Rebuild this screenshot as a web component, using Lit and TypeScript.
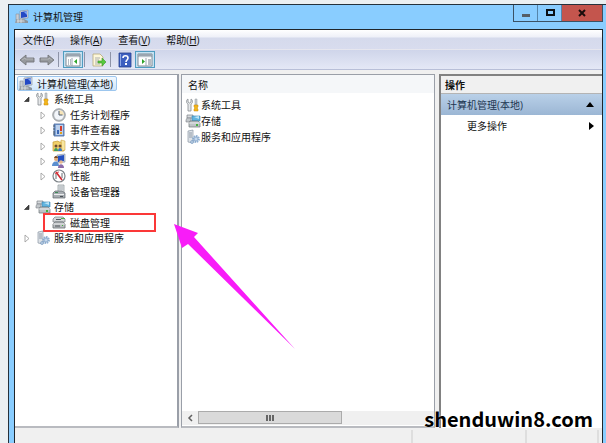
import { LitElement, html, css, svg, nothing, TemplateResult } from "lit";
import { customElement, property, state } from "lit/decorators.js";
import { classMap } from "lit/directives/class-map.js";

type Node = { label: string; icon: string; depth: number; open?: boolean; leaf?: boolean; marked?: boolean };

const TREE: Node[] = [
  { label: "计算机管理(本地)", icon: "computer", depth: 0, leaf: true },
  { label: "系统工具", icon: "tools", depth: 1, open: true },
  { label: "任务计划程序", icon: "clock", depth: 2 },
  { label: "事件查看器", icon: "event", depth: 2 },
  { label: "共享文件夹", icon: "share", depth: 2 },
  { label: "本地用户和组", icon: "users", depth: 2 },
  { label: "性能", icon: "perf", depth: 2 },
  { label: "设备管理器", icon: "device", depth: 2, leaf: true },
  { label: "存储", icon: "storage", depth: 1, open: true },
  { label: "磁盘管理", icon: "disk", depth: 2, leaf: true, marked: true },
  { label: "服务和应用程序", icon: "services", depth: 1 },
];

const ITEMS = [
  { label: "系统工具", icon: "tools" },
  { label: "存储", icon: "storage" },
  { label: "服务和应用程序", icon: "services" },
];

const MENUS = [
  ["文件", "F"],
  ["操作", "A"],
  ["查看", "V"],
  ["帮助", "H"],
];

const ICONS: Record<string, TemplateResult> = {
  computer: svg`
    <path d="M5 1l8-1v8l-8 1z" fill="#d5dbe3" stroke="#7f8b9b" stroke-width=".6"/>
    <path d="M6 2l6-1v6l-6 1z" fill="#2349c4"/><path d="M9 2l3-1v4z" fill="#7ea6f2"/>
    <path d="M1 4h3v6H1z" fill="#c9ced4" stroke="#8a929c" stroke-width=".6"/>
    <path d="M1 9h8l3 4H0z" fill="#9aa1a8"/><path d="M2 11h8M3 9v4M6 9v4" stroke="#eceff1" stroke-width=".7"/>
    <path d="M9 9l4 2v2h-3z" fill="#8d959d"/>`,
  tools: svg`
    <path d="M2 1v3l1.500 1L5 4V1c2 1 2 4 0 5v7H2V6C0 5 0 2 2 1z" fill="#e6e8ea" stroke="#858b91" stroke-width=".8"/>
    <path d="M9 1h2v6H9z" fill="#c9cdd1" stroke="#92989e" stroke-width=".5"/>
    <path d="M8 7h4v2l-1 1 1 1v2H8v-2l1-1-1-1z" fill="#f2b51c" stroke="#c98a08" stroke-width=".5"/>`,
  clock: svg`
    <circle cx="7" cy="7" r="6.300" fill="#b9bdc1" stroke="#85898d" stroke-width=".7"/>
    <circle cx="7" cy="7" r="4.800" fill="#f3f6fa"/>
    <path d="M7 7V2.200A4.800 4.800 0 0 1 11.800 7z" fill="#f6e4b8"/>
    <path d="M7 3v4h3.500" fill="none" stroke="#4c5b6d" stroke-width="1"/>`,
  event: svg`
    <path d="M2 1h10v12H2z" fill="#7fa3d6" stroke="#41639b" stroke-width=".8"/>
    <path d="M4 2h7v10H4z" fill="#bcd0ec"/>
    <path d="M1 3h2M1 6h2M1 9h2M1 11h2" stroke="#3b4652" stroke-width=".8"/>
    <path d="M5 7h2v4H5z" fill="#3c68b5"/><path d="M8 3h2v5H8z" fill="#d23b2e"/><path d="M8 9h2v2H8z" fill="#e3a21a"/>`,
  share: svg`
    <path d="M1 3l5-1 1 1h5v9H1z" fill="#f0cf6a" stroke="#c59b30" stroke-width=".7"/>
    <path d="M9 1l4 1v9l-3 1z" fill="#f8e6a0" stroke="#c59b30" stroke-width=".5"/>
    <circle cx="4" cy="7" r="1.500" fill="#6b4b32"/><circle cx="8" cy="7" r="1.500" fill="#6b4b32"/>
    <path d="M2 12c0-4 4-4 4 0z" fill="#3f9d5b"/><path d="M6 12c0-4 4-4 4 0z" fill="#3a78c4"/>`,
  users: svg`
    <path d="M5 1l8-1v8l-8 1z" fill="#ccd5e0" stroke="#7b8899" stroke-width=".6"/>
    <path d="M6 2l6-1v6l-6 1z" fill="#2450c0"/>
    <circle cx="4" cy="5" r="2" fill="#e0a878"/><path d="M2 4c1-3 4-2 4 0z" fill="#7a4a22"/>
    <path d="M0 12c0-6 7-6 7 0z" fill="#5b8fd0"/>
    <circle cx="9" cy="8" r="1.800" fill="#e9b98e"/><path d="M6 14c0-5 6-5 6 0z" fill="#8b6aa8"/>`,
  perf: svg`
    <circle cx="7" cy="7" r="6" fill="#fff" stroke="#7d8388" stroke-width="1.200"/>
    <path d="M4 10V5M10 9V4" stroke="#666c72" stroke-width="1"/>
    <path d="M4 3l6 8" stroke="#d2272f" stroke-width="1.600"/>
    <path d="M3 5a5 5 0 0 1 4-2" fill="none" stroke="#d2272f" stroke-width=".8"/>`,
  device: svg`
    <path d="M6 0h6v8H6z" fill="#dfe3e6" stroke="#8b9297" stroke-width=".7"/><path d="M7 2h4M7 4h4" stroke="#8b9297" stroke-width=".6"/>
    <path d="M1 8l2-2h7l3 2v5H1z" fill="#a7acb1" stroke="#62686d" stroke-width=".7"/>
    <path d="M2 9h10v1H2z" fill="#eceeef"/><path d="M3 7h3v1H3z" fill="#3f8b57"/><path d="M8 11h3v1H8z" fill="#4d5358"/>`,
  storage: svg`
    <path d="M1 1h6v3H1z" fill="#d7dadd" stroke="#7c8286" stroke-width=".7"/>
    <path d="M6 2h8v5H6z" fill="#62b5e0" stroke="#387fae" stroke-width=".6"/><path d="M8 3l5-1v3z" fill="#bfe5f7"/>
    <path d="M0 6l1-2h4v4H0z" fill="#c2c7ca" stroke="#7c8286" stroke-width=".6"/>
    <path d="M3 9l1-2h8l2 2v4H3z" fill="#bfc4c7" stroke="#6f7579" stroke-width=".7"/>
    <path d="M3 9h11" stroke="#f4f5f6" stroke-width=".8"/><path d="M10 10h2v2h-2z" fill="#45b13f"/>`,
  disk: svg`
    <path d="M1 3l2-2h8l2 2v3H1z" fill="#d3d6d8" stroke="#777d81" stroke-width=".7"/>
    <path d="M4 3h5v1H4z" fill="#555b60"/><path d="M9 2h4v1H9z" fill="#55ae4d"/>
    <path d="M1 8l2-2h8l2 2v4H1z" fill="#b9bdc0" stroke="#686e72" stroke-width=".8"/>
    <path d="M1 8h12" stroke="#f3f4f4" stroke-width=".8"/><path d="M3 10h5" stroke="#4c5257" stroke-width="1"/><path d="M10 9h1v1h-1z" fill="#45b13f"/>`,
  services: svg`
    <path d="M2 1l5-1v13l-5-1z" fill="#dde2e7" stroke="#8996a3" stroke-width=".7"/>
    <path d="M3 3h3M3 5h3M3 7h3" stroke="#7e8c9a" stroke-width=".8"/>
    <circle cx="10" cy="9" r="3" fill="none" stroke="#8fb0d3" stroke-width="1.800" stroke-dasharray="1.600 .7"/>
    <circle cx="10" cy="9" r="2" fill="#c3d8ee" stroke="#7697bd" stroke-width=".7"/>
    <circle cx="6" cy="12" r="1.500" fill="#b5cbe2" stroke="#7697bd" stroke-width=".6"/>`,
  back: svg`<path d="M0 7l6-5v3h8v4H6v3z" fill="#96999d" stroke="#74777b" stroke-width=".9"/><path d="M2 7l3-2v1h8" fill="none" stroke="#b9bbbe" stroke-width=".8"/>`,
  forward: svg`<path d="M14 7L8 2v3H0v4h8v3z" fill="#96999d" stroke="#74777b" stroke-width=".9"/><path d="M1 6h8V5l3 2" fill="none" stroke="#b9bbbe" stroke-width=".8"/>`,
  paneLeft: svg`
    <path d="M0 1h14v12H0z" fill="#fff" stroke="#7f8a95"/><path d="M0 1h14v3H0z" fill="#9aa5b0"/>
    <path d="M1 4h12" stroke="#e6eaee"/><path d="M6 5v8" stroke="#9aa5b0"/>
    <path d="M2 7h3M2 9h3M2 11h3" stroke="#6f7b88" stroke-dasharray="1 1"/><path d="M11 6v5L8 8.500z" fill="#2da42a"/>`,
  paneRight: svg`
    <path d="M0 1h14v12H0z" fill="#fff" stroke="#7f8a95"/><path d="M0 1h14v3H0z" fill="#9aa5b0"/>
    <path d="M1 4h12" stroke="#e6eaee"/><path d="M8 5v8" stroke="#9aa5b0"/>
    <path d="M10 7h3M10 9h3M10 11h3" stroke="#6f7b88"/><path d="M4 6v5l3-2.500z" fill="#2da42a"/>`,
  exportList: svg`
    <path d="M1 1h7l3 3v9H1z" fill="#fdf7da" stroke="#b6a97a" stroke-width=".8"/>
    <path d="M3 5h5M3 7h4M3 9h4M3 11h5" stroke="#8a8f9b" stroke-width=".7"/>
    <path d="M6 8h4V5l4 4-4 4v-3H6z" fill="#58c93d" stroke="#39982a" stroke-width=".6"/>`,
  help: svg`
    <path d="M1 0h12v14H1z" fill="#3c5fc0" stroke="#27408e" stroke-width=".8"/><path d="M2 1h1v12H2z" fill="#8fa8e6"/>
    <path d="M5 5c0-3 5-3 5 0 0 2-2 2-2 4" fill="none" stroke="#fff" stroke-width="1.600"/><path d="M7 10h2v2H7z" fill="#fff"/>`,
};

const icon = (name: string) => html`<svg class="icon" viewBox="0 0 14 14" width="14" height="14" aria-hidden="true">${ICONS[name]}</svg>`;

const base = css`
  * { box-sizing: border-box; }
  button {
    font: inherit; color: inherit; background: none; border: 0; margin: 0; padding: 0;
    display: flex; align-items: center; white-space: nowrap; text-align: left;
  }
  ul { list-style: none; margin: 0; padding: 0; }
  svg { display: block; flex: none; overflow: visible; }
`;

@customElement("console-tree")
export class ConsoleTree extends LitElement {
  @property({ attribute: false }) nodes: Node[] = [];
  @state() private selected = 0;

  static styles = [base, css`
    :host { display: block; min-width: 0; }
    .tree { display: grid; grid-auto-rows: 1fr; height: 170px; }
    .row { display: flex; align-items: center; position: relative; }
    .depth0 { padding-left: 2px; }
    .depth1 { padding-left: 7px; }
    .depth2 { padding-left: 23px; }
    .twist { width: 10px; height: 14px; margin-right: 4px; justify-content: center; flex: none; }
    .name { gap: 4px; height: 15px; }
    .on { padding: 0 3px 0 1px; border: 1px solid #9cc6ee; border-radius: 2px; background: linear-gradient(#f1f8fe, #cfe5fa); }
    .mark { position: absolute; left: 28px; top: -2px; width: 113px; height: 19px; border: 2px solid #fb3838; pointer-events: none; }
  `];

  render() {
    return html`<ul class="tree" role="tree">
      ${this.nodes.map((n, i) => html`
        <li class="row depth${n.depth}" role="treeitem" aria-selected=${i === this.selected}>
          ${n.depth === 0 ? nothing : n.leaf
            ? html`<span class="twist"></span>`
            : html`<button class="twist" aria-label=${n.open ? "折叠" : "展开"}>
                <svg viewBox="0 0 8 8" width="8" height="8">${n.open
                  ? svg`<path d="M6 2v4.500H1.500z" fill="#404040" stroke="#222" stroke-width=".6"/>`
                  : svg`<path d="M2 1l4 3.500L2 8z" fill="#fff" stroke="#a2a2a2" stroke-width=".9"/>`}</svg>
              </button>`}
          <button class=${classMap({ name: true, on: i === this.selected })} @click=${() => (this.selected = i)}>
            ${icon(n.icon)}<span>${n.label}</span>
          </button>
          ${n.marked ? html`<span class="mark"></span>` : nothing}
        </li>`)}
    </ul>`;
  }
}

@customElement("app-root")
export class AppRoot extends LitElement {
  static styles = [base, css`
    :host {
      display: flex; flex-direction: column; position: relative; box-sizing: border-box;
      height: 100vh; padding: 4px 0 0 8px; overflow: hidden; background: #ebf0f2; color: #111;
      font: 10px/14px "Open Sans", "Noto Sans CJK SC", sans-serif;
    }
    .window {
      flex: 1; min-height: 0; display: flex; flex-direction: column;
      background: #89cdff; border: solid #25323c; border-width: 1px 0 0 1px; padding: 0 3px 0 5px;
    }
    .title { display: flex; align-items: flex-start; height: 24px; flex: none; }
    .caption { display: flex; align-items: center; gap: 4px; flex: 1; height: 24px; margin: 0; padding-left: 1px; font: inherit; }
    .controls { display: flex; height: 17px; border: solid #3b5265; border-width: 0 1px 1px; }
    .controls button { justify-content: center; width: 24px; border-right: 1px solid #5585aa; }
    .controls .close { width: 40px; border: 0; background: #c4554d; }

    .client { flex: 1; min-height: 0; display: flex; flex-direction: column; background: #f0f0f0; border: solid #20262b; border-width: 1px 1px 0; }
    .menu {
      display: flex; align-items: center; gap: 16px; height: 20px; flex: none; padding-left: 8px;
      background: linear-gradient(#fff, #eef0f8 7px, #d5daec 8px, #d8dcee); border-bottom: 1px solid #e6e6ee;
    }
    .menu u { text-underline-offset: 1px; }
    .bar {
      display: flex; align-items: center; height: 20px; flex: none; padding-left: 2px;
      background: linear-gradient(#cfd5ea, #e4e8f6); border-bottom: 1px solid #b8bfd8;
    }
    .bar button { width: 20px; height: 17px; justify-content: center; }
    .bar .down { border: 1px solid #4f9cc0; background: #c5e2f2; }
    .sep { width: 1px; height: 15px; background: #8e94a8; margin: 0 4px; }
    .sep.tight { margin: 0 4px 0 1px; }

    .panes { flex: 1; min-height: 0; display: grid; grid-template-columns: 164px minmax(0, 1fr) 163px; gap: 2px; padding-top: 4px; }
    .pane { min-width: 0; min-height: 0; display: flex; flex-direction: column; background: #fff; border: 1px solid #9a9fa8; border-bottom: 2px solid #b9bbc0; }
    .side { border-width: 1px 2px 2px 0; }
    .center { border-width: 1px 1px 2px 1px; margin-right: 2px; }
    .head { height: 18px; margin: 0; padding: 3px 6px 0; background: #f5f7f9; font: inherit; }
    .list { flex: 1; padding: 4px 0 0 4px; }
    .list button { height: 16px; }
    .list .icon { margin-right: 1px; }
    .scroll { display: flex; height: 14px; margin-bottom: 1px; background: #f0f0f0; }
    .scroll button { width: 16px; justify-content: center; }
    .thumb { flex: 0 0 57%; height: 13px; display: flex; align-items: center; justify-content: center; background: #dadada; border: 1px solid #ababab; }

    .actions { border: solid #818181; border-width: 2px 0 0 2px; }
    .actions h2 { margin: 0; height: 18px; padding: 2px 4px; font: inherit; font-weight: 700; background: #f0f0f0; border-bottom: 1px solid #b4b4b4; }
    .actions button { justify-content: space-between; padding: 0 8px 0 6px; height: 21px; }
    .actions .group { background: linear-gradient(#b9d0e8, #9bb6d4); color: #1c3550; }
    .actions .more { padding-left: 26px; }

    console-tree { padding-top: 1px; }

    .status { display: flex; justify-content: flex-end; height: 15px; flex: none; padding-right: 3px; }
    .cell { border-right: 2px solid #dedede; margin-top: 2px; }
    .cell.first { flex: 1; }
    .cell.second { width: 114px; }
    .cell.third { width: 72px; }

    .arrow { position: absolute; left: 174px; top: 224px; pointer-events: none; }
    .site { position: absolute; right: 13px; bottom: 10px; color: #000; font: 700 20px/28px "Noto Sans CJK SC", sans-serif; text-shadow: 0 0 2px #fff; }
  `];

  render() {
    return html`
      <div class="window">
        <header class="title">
          <h1 class="caption">${icon("computer")}<span>计算机管理</span></h1>
          <div class="controls">
            <button aria-label="最小化"><svg width="10" height="10"><path d="M1 6h8v3H1z" fill="#555e66"/></svg></button>
            <button aria-label="最大化"><svg width="10" height="10"><path d="M2 2h7v5H2z" fill="none" stroke="#0c1116" stroke-width="2"/></svg></button>
            <button class="close" aria-label="关闭"><svg width="10" height="10"><path d="M2 2l6 6M8 2L2 8" stroke="#1a0c0b" stroke-width="2"/></svg></button>
          </div>
        </header>
        <div class="client">
          <nav class="menu">
            ${MENUS.map(([t, k]) => html`<button><span>${t}(<u>${k}</u>)</span></button>`)}
          </nav>
          <div class="bar" role="toolbar">
            <button aria-label="后退" disabled>${icon("back")}</button>
            <button aria-label="前进" disabled>${icon("forward")}</button>
            <span class="sep tight"></span>
            <button class="down" aria-label="显示/隐藏控制台树">${icon("paneLeft")}</button>
            <span class="sep tight"></span>
            <button aria-label="导出列表">${icon("exportList")}</button>
            <span class="sep tight"></span>
            <button aria-label="帮助">${icon("help")}</button>
            <button class="down" aria-label="显示/隐藏操作窗格">${icon("paneRight")}</button>
          </div>
          <main class="panes">
            <section class="pane side"><console-tree .nodes=${TREE}></console-tree></section>
            <section class="pane center">
              <h2 class="head">名称</h2>
              <ul class="list">
                ${ITEMS.map((i) => html`<li><button>${icon(i.icon)}<span>${i.label}</span></button></li>`)}
              </ul>
              <div class="scroll">
                <button aria-label="向左滚动"><svg width="6" height="8"><path d="M5 1L2 4l3 3" fill="none" stroke="#606060" stroke-width="1.500"/></svg></button>
                <div class="thumb"><svg width="8" height="6"><path d="M1 0v6M4 0v6M7 0v6" stroke="#666" stroke-width="2"/></svg></div>
              </div>
            </section>
            <aside class="pane actions">
              <h2>操作</h2>
              <button class="group"><span>计算机管理(本地)</span><svg width="8" height="5"><path d="M0 5l4-5 4 5z" fill="#000"/></svg></button>
              <button class="more"><span>更多操作</span><svg width="5" height="8"><path d="M0 0l5 4-5 4z" fill="#000"/></svg></button>
            </aside>
          </main>
          <footer class="status"><span class="cell first"></span><span class="cell second"></span><span class="cell third"></span></footer>
        </div>
      </div>
      <svg class="arrow" width="121" height="125" aria-hidden="true"><path d="M0 0l24 9-4 4 101 112L14 20l-6 4z" fill="#f81cf8"/></svg>
      <span class="site">shenduwin8.com</span>
    `;
  }
}
